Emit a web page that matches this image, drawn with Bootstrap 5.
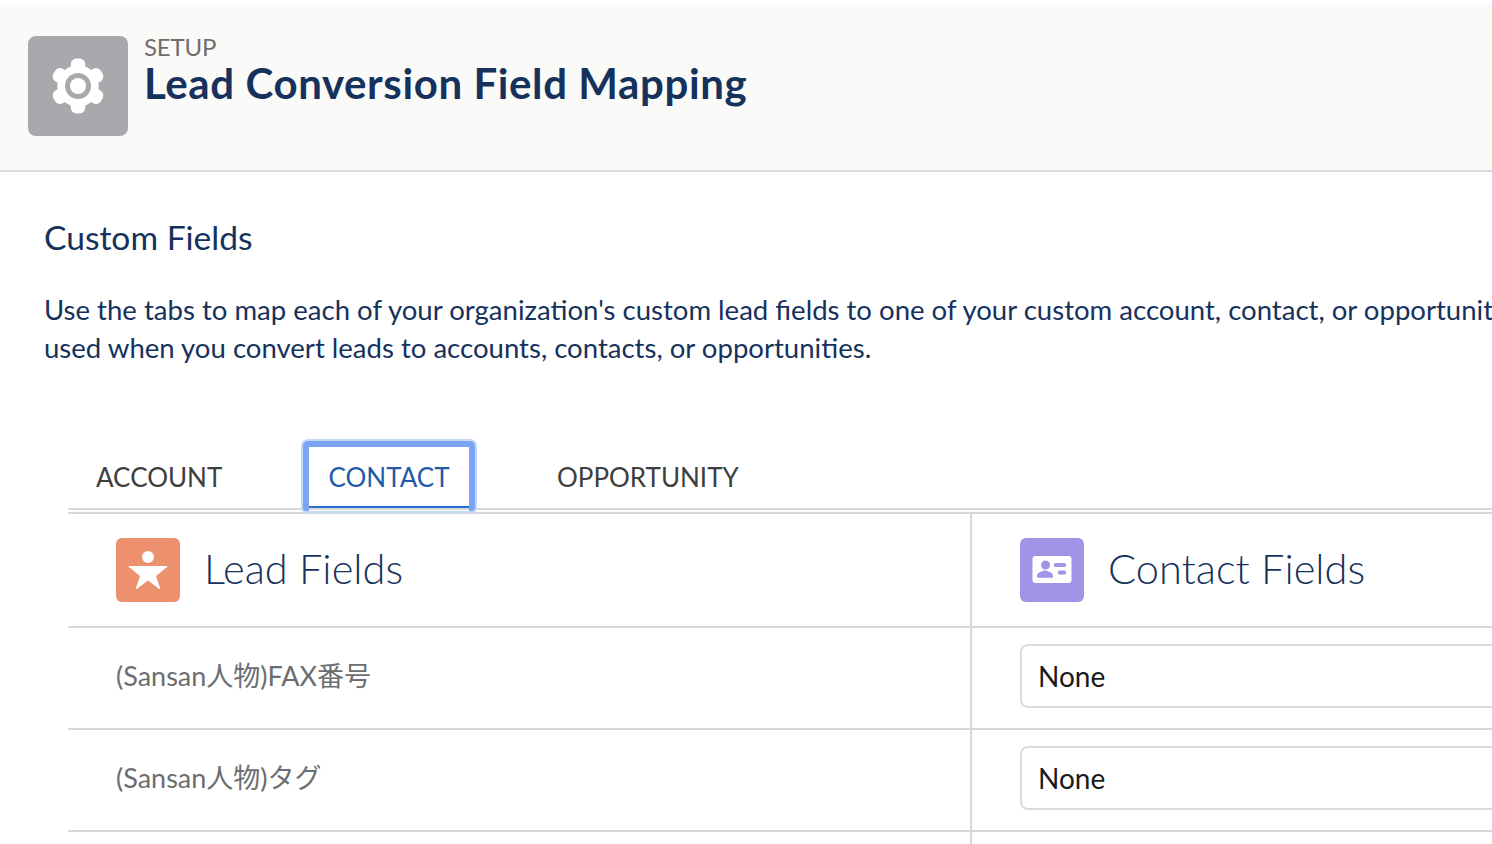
<!DOCTYPE html>
<html lang="en">
<head>
<meta charset="utf-8">
<title>Lead Conversion Field Mapping</title>
<link href="https://cdn.jsdelivr.net/npm/bootstrap@5.3.0/dist/css/bootstrap.min.css" rel="stylesheet">
<style>
html,body{height:844px;overflow:hidden;background:#fff}
body{font-family:"Lato","Noto Sans CJK JP",sans-serif;color:#16325c}
.page-sheet{width:1900px;padding-top:4px}
.head-band{height:168px;background:#fafaf9;border-bottom:2px solid #dddbda;padding:32px 28px 0;gap:16px}
.gear-tile{width:100px;height:100px;background:#a8a9ad;border-radius:8px}
.head-kicker{font-size:24px;line-height:22px;color:#706e6b;letter-spacing:-.2px}
.head-title{font-size:42px;line-height:48px;font-weight:700;color:#16325c;margin:1px 0 0;letter-spacing:.6px}
.body-zone{padding:46px 0 0 44px}
.sect-title{font-size:33.6px;line-height:38px;font-weight:400;margin:0 0 35px}
.intro-text{font-size:27.55px;line-height:38px;margin:0;white-space:nowrap}
.map-zone{margin:72px 0 0 24px;width:1832px}
.tab-strip{height:71px;border-bottom:2px solid #d8d8d8}
.tab-item{font-size:26px;line-height:34px;color:#3e3e3c;padding:4px 0 0;display:flex;align-items:center;height:72px;text-decoration:none}
.tab-one{margin-left:28px;width:207px}
.tab-focus{width:172px;height:70px;margin-top:2px;color:#1f5aa8;justify-content:center;border:6px solid #7aa4f2;border-bottom:0;border-radius:5px 5px 3px 3px;box-shadow:0 0 0 2px #c5d7f8;position:relative;z-index:1;padding:0 0 4px}
.tab-focus::after{content:"";position:absolute;left:0;right:0;bottom:3px;height:2px;background:#2b6fce}
.tab-three{margin-left:82px}
.map-row{border-bottom:2px solid #d8d8d8}
.map-head{border-top:2px solid #d8d8d8;margin-top:2px;height:116px}
.map-item{height:102px}
.lead-cell{width:904px;padding-left:48px;border-right:2px solid #d8d8d8;flex:none}
.map-item .lead-cell{padding-bottom:3px}
.contact-cell{padding-left:48px;flex:1}
.map-item .contact-cell{padding-bottom:4px}
.obj-tile{width:64px;height:64px;border-radius:6px;flex:none;margin-right:24px}
.tile-lead{background:#ec906d}
.tile-contact{background:#a094e6}
.col-label{font-size:41.6px;line-height:50px;font-weight:300;color:#16325c;margin-bottom:4px}
.lead-name{font-size:27px;color:#6b6d70}
.none-box{width:780px;height:64px;border:2px solid #dddbda;border-radius:8px;padding-left:16px;font-size:28px;color:#1a1a1a;background:#fff}
.row-tail{height:20px}
</style>
</head>
<body>
<div class="page-sheet">
  <header class="head-band d-flex align-items-start">
    <div class="gear-tile d-flex align-items-center justify-content-center">
      <svg width="58" height="58" viewBox="0 0 56 56" aria-hidden="true">
        <g fill="#fff">
          <circle cx="28" cy="28" r="20"/>
          <rect x="21" y="1.500" width="14" height="14" rx="5.500"/>
          <rect x="21" y="1.500" width="14" height="14" rx="5.500" transform="rotate(60 28 28)"/>
          <rect x="21" y="1.500" width="14" height="14" rx="5.500" transform="rotate(120 28 28)"/>
          <rect x="21" y="1.500" width="14" height="14" rx="5.500" transform="rotate(180 28 28)"/>
          <rect x="21" y="1.500" width="14" height="14" rx="5.500" transform="rotate(240 28 28)"/>
          <rect x="21" y="1.500" width="14" height="14" rx="5.500" transform="rotate(300 28 28)"/>
        </g>
        <circle cx="28" cy="28" r="12.500" fill="#a8a9ad"/>
        <circle cx="28" cy="28" r="7.800" fill="#fff"/>
      </svg>
    </div>
    <div>
      <div class="head-kicker">SETUP</div>
      <h1 class="head-title">Lead Conversion Field Mapping</h1>
    </div>
  </header>

  <main class="body-zone">
    <h2 class="sect-title">Custom Fields</h2>
    <p class="intro-text">Use the tabs to map each of your organization's custom lead fields to one of your custom account, contact, or opportunity fields. These mappings are<br>used when you convert leads to accounts, contacts, or opportunities.</p>

    <div class="map-zone">
      <div class="tab-strip d-flex align-items-start">
        <a class="tab-item tab-one" href="#">ACCOUNT</a>
        <a class="tab-item tab-focus" href="#">CONTACT</a>
        <a class="tab-item tab-three" href="#">OPPORTUNITY</a>
      </div>

      <div class="map-row map-head d-flex">
        <div class="lead-cell d-flex align-items-center">
          <span class="obj-tile tile-lead d-flex align-items-center justify-content-center">
            <svg width="40" height="48" viewBox="0 0 40 48" aria-hidden="true" fill="#fff">
              <circle cx="20" cy="11" r="6"/>
              <path d="M1.200 20h37.600c.6 0 .8.600.3 1L28 30l4.200 12.200c.2.700-.4 1.100-1 .7L20 34.500 8.800 42.900c-.6.400-1.200 0-1-.7L12 30 .9 21c-.5-.4-.3-1 .3-1z"/>
            </svg>
          </span>
          <span class="col-label">Lead Fields</span>
        </div>
        <div class="contact-cell d-flex align-items-center">
          <span class="obj-tile tile-contact d-flex align-items-center justify-content-center">
            <svg width="40" height="28" viewBox="0 0 40 28" aria-hidden="true">
              <rect x="0.500" y="0" width="39" height="27" rx="3" fill="#fff"/>
              <circle cx="13.500" cy="9" r="4.500" fill="#a094e6"/>
              <path d="M5 20.500c0-2.500 1-3.500 3.500-4.500 2-.8 2.500-1.500 4.500-1.500s2.500.7 4.500 1.500c2.500 1 3.500 2 3.500 4.500 0 .8-.5 1.200-1.200 1.200H6.200c-.7 0-1.200-.4-1.200-1.200z" fill="#a094e6"/>
              <rect x="22" y="7" width="12" height="4" rx="1.500" fill="#a094e6"/>
              <rect x="26" y="14.500" width="8" height="4" rx="1.500" fill="#a094e6"/>
            </svg>
          </span>
          <span class="col-label">Contact Fields</span>
        </div>
      </div>

      <div class="map-row map-item d-flex">
        <div class="lead-cell d-flex align-items-center"><span class="lead-name">(Sansan人物)FAX番号</span></div>
        <div class="contact-cell d-flex align-items-center"><div class="none-box d-flex align-items-center">None</div></div>
      </div>
      <div class="map-row map-item d-flex">
        <div class="lead-cell d-flex align-items-center"><span class="lead-name">(Sansan人物)タグ</span></div>
        <div class="contact-cell d-flex align-items-center"><div class="none-box d-flex align-items-center">None</div></div>
      </div>
      <div class="d-flex row-tail"><div class="lead-cell"></div></div>
    </div>
  </main>
</div>
<script src="https://cdn.jsdelivr.net/npm/bootstrap@5.3.0/dist/js/bootstrap.bundle.min.js"></script>
</body>
</html>
